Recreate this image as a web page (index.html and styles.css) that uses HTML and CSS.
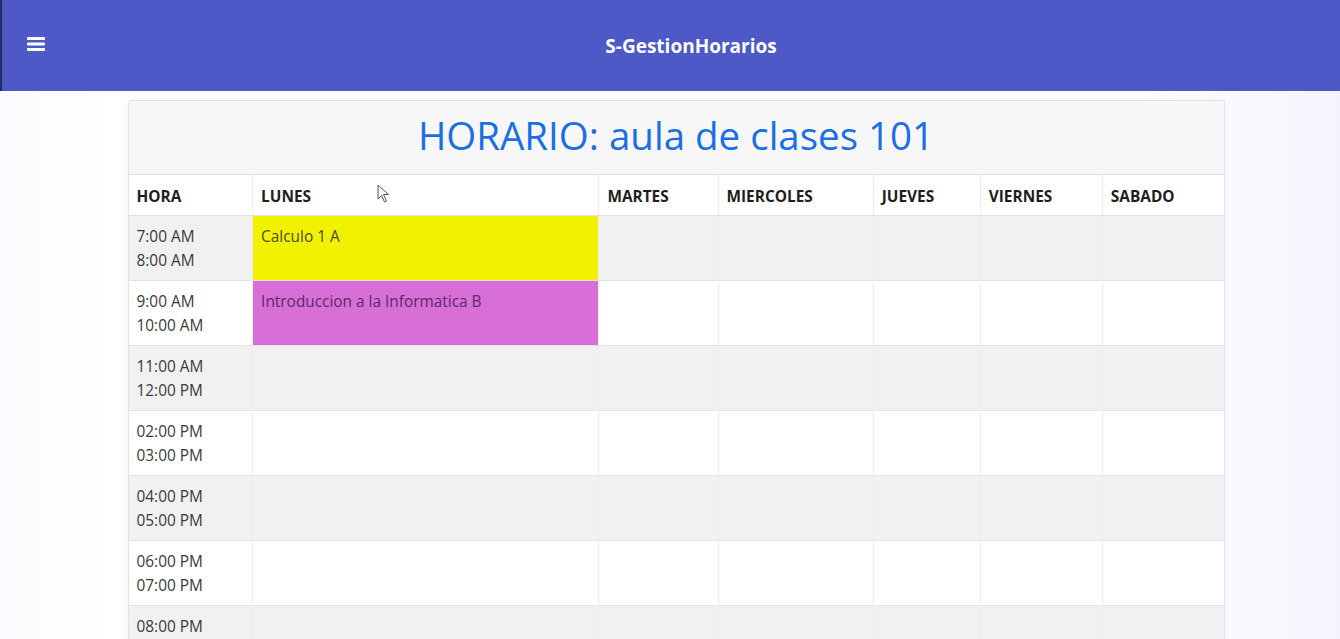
FILE: index.html
```html
<!DOCTYPE html>
<html lang="es">
<head>
<meta charset="utf-8">
<title>S-GestionHorarios</title>
<link rel="stylesheet" href="styles.css">
</head>
<body>
<header class="navbar">
  <button class="menu-btn" aria-label="menu">
    <svg width="18" height="14" viewBox="0 0 18 14"><rect x="0" y="0" width="18" height="3" rx="1" fill="#fff"/><rect x="0" y="5.5" width="18" height="3" rx="1" fill="#fff"/><rect x="0" y="11" width="18" height="3" rx="1" fill="#fff"/></svg>
  </button>
  <div class="brand">S-GestionHorarios</div>
  <div class="spacer"></div>
</header>
<main class="content">
  <section class="card">
    <div class="card-header">
      <h1 class="title">HORARIO: aula de clases 101</h1>
    </div>
    <table class="schedule">
      <colgroup>
        <col class="c-hora"><col class="c-lunes"><col class="c-martes"><col class="c-mier"><col class="c-jue"><col class="c-vie"><col class="c-sab">
      </colgroup>
      <thead>
        <tr><th>HORA</th><th class="th-lunes">LUNES<svg class="cursor" width="14" height="20" viewBox="0 0 14 20"><path d="M1 1 L1 15 L4.5 11.5 L7.5 18 L9.5 17 L6.5 10.5 L11.5 10.5 Z" fill="#fff" stroke="#555" stroke-width="1" stroke-linejoin="round"/></svg></th><th>MARTES</th><th>MIERCOLES</th><th>JUEVES</th><th>VIERNES</th><th>SABADO</th></tr>
      </thead>
      <tbody>
        <tr><td>7:00 AM<br>8:00 AM</td><td class="ev ev-yellow">Calculo 1 A</td><td></td><td></td><td></td><td></td><td></td></tr>
        <tr><td>9:00 AM<br>10:00 AM</td><td class="ev ev-pink">Introduccion a la Informatica B</td><td></td><td></td><td></td><td></td><td></td></tr>
        <tr><td>11:00 AM<br>12:00 PM</td><td></td><td></td><td></td><td></td><td></td><td></td></tr>
        <tr><td>02:00 PM<br>03:00 PM</td><td></td><td></td><td></td><td></td><td></td><td></td></tr>
        <tr><td>04:00 PM<br>05:00 PM</td><td></td><td></td><td></td><td></td><td></td><td></td></tr>
        <tr><td>06:00 PM<br>07:00 PM</td><td></td><td></td><td></td><td></td><td></td><td></td></tr>
        <tr><td>08:00 PM<br>09:00 PM</td><td></td><td></td><td></td><td></td><td></td><td></td></tr>
      </tbody>
    </table>
  </section>
</main>
</body>
</html>
```
FILE: styles.css
```css
html, body {
  margin: 0;
  padding: 0;
  height: 639px;
  overflow: hidden;
}
body {
  font-family: "Open Sans", "Noto Sans", "DejaVu Sans", sans-serif;
  color: #212529;
  background: linear-gradient(90deg, #fbfbff 0%, #ffffff 10%, #ffffff 85%, #f3f4fd 100%);
}
.navbar {
  height: 91px;
  background: #4c59c7;
  border-left: 2px solid #262c66;
  display: flex;
  align-items: center;
  box-sizing: border-box;
}
.menu-btn {
  background: none;
  border: 0;
  padding: 0;
  margin-left: 25px;
  margin-top: -3px;
  width: 18px;
  height: 14px;
  display: flex;
}
.brand {
  flex: 1;
  text-align: center;
  color: #fff;
  font-weight: 700;
  font-size: 19px;
  padding-left: 42px;
}
.spacer { width: 45px; }
.content {
  display: flex;
  justify-content: center;
  padding-top: 9px;
  padding-left: 12px;
}
.card {
  width: 1097px;
  box-sizing: border-box;
  background: #fff;
  border: 1px solid #e3e3e6;
  border-radius: 3px;
  box-shadow: 0 0 10px rgba(80, 90, 200, 0.06);
}
.card-header {
  height: 73px;
  background: #f7f7f7;
  border-bottom: 1px solid #dedede;
  display: flex;
  align-items: center;
  justify-content: center;
}
.title {
  margin: 0;
  font-weight: 400;
  font-size: 38.5px;
  color: #1b6fe4;
  margin-top: -6px;
}
.schedule {
  width: 100%;
  border-collapse: collapse;
  table-layout: fixed;
  font-size: 15.4px;
}
.c-hora { width: 124px; }
.c-lunes { width: 346px; }
.c-martes { width: 119px; }
.c-mier { width: 155px; }
.c-jue { width: 107px; }
.c-vie { width: 122px; }
.c-sab { width: 121px; }
.schedule th {
  text-align: left;
  font-weight: 700;
  font-size: 15.4px;
  height: 40px;
  padding: 3px 8px 0;
  color: #1e1e1e;
  border-left: 1px solid #ececec;
  border-bottom: 1px solid #e2e2e2;
  vertical-align: middle;
  box-sizing: border-box;
}
.th-lunes { position: relative; }
.cursor {
  position: absolute;
  left: 124px;
  top: 9px;
}
.schedule th:first-child, .schedule td:first-child { border-left: 0; }
.schedule td {
  height: 65px;
  box-sizing: border-box;
  padding: 9px 8px 7px;
  line-height: 24px;
  vertical-align: top;
  color: #3a3a3a;
  border-left: 1px solid #ececec;
  border-top: 1px solid #e4e4e4;
}
.schedule tbody tr:nth-child(odd) td { background: #f1f1f1; }
.schedule tbody tr:nth-child(even) td { background: #ffffff; }
.schedule tbody tr td.ev-yellow { background: #f2f200; color: #4a4a1a; }
.schedule tbody tr td.ev-pink { background: #d86fd6; color: #5a2a6a; }
```
